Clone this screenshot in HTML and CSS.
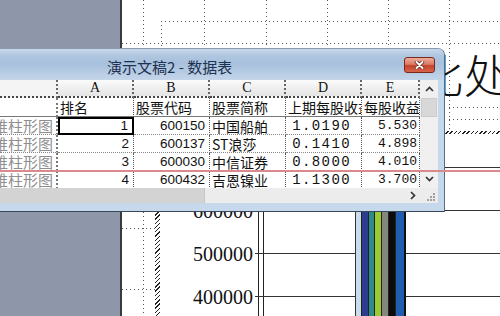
FILE: index.html
```html
<!DOCTYPE html>
<html lang="zh">
<head>
<meta charset="utf-8">
<title>演示文稿2 - 数据表</title>
<link rel="stylesheet" href="styles.css">
</head>
<body>
<div class="screen">
  <div class="sidebar"></div>
  <div class="slide">
    <div class="vdot v1"></div>
    <div class="vdot v2"></div>
    <div class="vdot v3"></div>
    <div class="vdot v4"></div>
    <div class="vdot v5"></div>
    <div class="vdot v6"></div>
    <div class="vdot v7"></div>
    <div class="hdot h1"></div>
    <div class="hdot h2"></div>
    <div class="hdot h3"></div>
    <div class="hdot h4"></div>
    <div class="hdot h5"></div>
    <div class="hdot h6"></div>
    <div class="slide-title">比处</div>
    <div class="chart">
      <div class="hatch-top"></div>
      <div class="chart-main">
        <div class="hatch-left"></div>
        <div class="plot">
          <div class="tick"><span class="lab">700000</span><div class="tick-line"><div class="axis"></div><div class="grid"></div></div></div>
          <div class="tick"><span class="lab">600000</span><div class="tick-line"><div class="axis"></div><div class="grid"></div></div></div>
          <div class="tick"><span class="lab">500000</span><div class="tick-line"><div class="axis"></div><div class="grid"></div></div></div>
          <div class="tick"><span class="lab">400000</span><div class="tick-line"><div class="axis"></div><div class="grid"></div></div></div>
          <div class="bars">
            <div class="bar b1"></div>
            <div class="bar b2"></div>
            <div class="bar b3"></div>
            <div class="bar b4"></div>
            <div class="bar b5"></div>
            <div class="bar b6"></div>
            <div class="bar b7"></div>
          </div>
        </div>
      </div>
    </div>
  </div>

  <div class="window">
    <div class="titlebar">
      <span class="title">演示文稿2 - 数据表</span>
      <div class="close"><svg width="11" height="8" viewBox="0 0 11 8"><path d="M2.5 1 L8.5 7 M8.5 1 L2.5 7" stroke="#5a1a10" stroke-width="3.4" stroke-linecap="round"/><path d="M2.5 1 L8.5 7 M8.5 1 L2.5 7" stroke="#fff" stroke-width="2" stroke-linecap="round"/></svg></div>
    </div>
    <div class="client">
      <div class="sheet">
        <div class="c hd corner"></div>
        <div class="c hd">A</div>
        <div class="c hd">B</div>
        <div class="c hd">C</div>
        <div class="c hd">D</div>
        <div class="c hd">E</div>

        <div class="c rh r0"></div>
        <div class="c r0">排名</div>
        <div class="c r0">股票代码</div>
        <div class="c r0">股票简称</div>
        <div class="c r0">上期每股收益</div>
        <div class="c r0">每股收益</div>

        <div class="c rh">三维柱形图</div>
        <div class="c num sel">1</div>
        <div class="c num">600150</div>
        <div class="c">中国船舶</div>
        <div class="c dec">1.0190</div>
        <div class="c dec2">5.530</div>

        <div class="c rh">三维柱形图</div>
        <div class="c num">2</div>
        <div class="c num">600137</div>
        <div class="c">ST浪莎</div>
        <div class="c dec">0.1410</div>
        <div class="c dec2">4.898</div>

        <div class="c rh">三维柱形图</div>
        <div class="c num">3</div>
        <div class="c num">600030</div>
        <div class="c">中信证券</div>
        <div class="c dec">0.8000</div>
        <div class="c dec2">4.010</div>

        <div class="c rh">三维柱形图</div>
        <div class="c num">4</div>
        <div class="c num">600432</div>
        <div class="c">吉恩镍业</div>
        <div class="c dec">1.1300</div>
        <div class="c dec2">3.700</div>
      </div>
      <div class="vscroll">
        <div class="sbtn"><svg width="9" height="6" viewBox="0 0 9 6"><path d="M1 5 L4.5 1.5 L8 5" fill="none" stroke="#333" stroke-width="1.7"/></svg></div>
        <div class="vthumb"></div>
        <div class="vspace"></div>
        <div class="sbtn"><svg width="9" height="6" viewBox="0 0 9 6"><path d="M1 1 L4.5 4.5 L8 1" fill="none" stroke="#333" stroke-width="1.7"/></svg></div>
      </div>
    </div>
    <div class="hbar">
      <div class="htrack">
        <div class="hthumb"></div>
        <div class="hright"><svg width="6" height="9" viewBox="0 0 6 9"><path d="M1 1 L4.5 4.5 L1 8" fill="none" stroke="#333" stroke-width="1.7"/></svg></div>
      </div>
      <div class="grip"><svg width="10" height="10" viewBox="0 0 10 10"><rect x="7" y="1" width="2" height="2" fill="#a0a0a0"/><rect x="4" y="4" width="2" height="2" fill="#a0a0a0"/><rect x="7" y="4" width="2" height="2" fill="#a0a0a0"/><rect x="1" y="7" width="2" height="2" fill="#a0a0a0"/><rect x="4" y="7" width="2" height="2" fill="#a0a0a0"/><rect x="7" y="7" width="2" height="2" fill="#a0a0a0"/></svg></div>
    </div>
  </div>

  <div class="redline"></div>
</div>
</body>
</html>
```
FILE: styles.css
```css
* { box-sizing: border-box; margin: 0; padding: 0; }
html, body { margin: 0; width: 500px; height: 316px; overflow: hidden; background: #fff; }
body { font-family: "Noto Sans CJK SC", sans-serif; }

.screen { position: relative; width: 500px; height: 316px; display: flex; overflow: hidden; background: #fff; }
.sidebar { flex: none; width: 122px; background: #8e97aa; border-right: 2px solid #3a3a3a; }
.slide { position: relative; flex: 1; background: #fff; }

.vdot { position: absolute; width: 1px; background: repeating-linear-gradient(to bottom, #555 0 1px, transparent 1px 4px); }
.hdot { position: absolute; height: 1px; background: repeating-linear-gradient(to right, #555 0 1px, transparent 1px 4px); }
.v1 { left: 21px; top: 0; height: 316px; }
.v2 { left: 39px; top: 21px; height: 28px; }
.v3 { left: 82px; top: 0; height: 48px; }
.v4 { left: 144px; top: 0; height: 48px; }
.v5 { left: 205px; top: 0; height: 48px; }
.v6 { left: 266px; top: 0; height: 48px; }
.v7 { left: 327px; top: 0; height: 131px; }
.h1 { left: 39px; right: 0; top: 21px; }
.h2 { left: 0; right: 0; top: 43px; }
.h3 { left: 327px; right: 0; top: 107px; }
.h4 { left: 327px; right: 0; top: 119px; }
.h5 { left: 0; width: 33px; top: 228px; }
.h6 { left: 0; width: 33px; top: 289px; }

.slide-title { position: absolute; left: 296px; top: 50px; font-size: 46px; line-height: 46px; font-weight: 300; color: #111; white-space: nowrap; }

.chart { position: absolute; left: 33px; top: 131px; right: -40px; bottom: -40px; display: flex; flex-direction: column; }
.hatch-top { flex: none; height: 3px; background: repeating-linear-gradient(135deg, #222 0 1px, #fff 1px 3px); }
.chart-main { flex: 1; display: flex; }
.hatch-left { flex: none; width: 5px; background: repeating-linear-gradient(135deg, #222 0 1px, #fff 1px 3px); }
.plot { flex: 1; position: relative; padding-top: 33px; }
.tick { height: 43px; display: flex; }
.lab { flex: none; width: 95px; padding-right: 2px; margin-top: -9px; height: 20px; text-align: right; font-family: "Liberation Serif", serif; font-size: 20px; line-height: 20px; color: #111; }
.tick-line { flex: 1; display: flex; border-top: 1.5px solid #333; }
.axis { flex: none; width: 6px; margin-left: 3px; border-left: 1.5px solid #222; border-right: 1.5px solid #222; }
.grid { flex: 1; }

.bars { position: absolute; left: 195px; top: 0; bottom: 0; display: flex; border-left: 1px solid #333; border-right: 2px solid #111; }
.bar { height: 100%; border-right: 1px solid #222; }
.b1 { width: 6px; background: #c9dceb; }
.b2 { width: 7px; background: #2d3c8e; }
.b3 { width: 6px; background: #2f8a8c; }
.b4 { width: 7px; background: #9acb35; }
.b5 { width: 7px; background: #85877c; }
.b6 { width: 7px; background: #0c0c0c; }
.b7 { width: 8px; background: #1f5db0; border-right: none; }

.window { position: absolute; left: 0; top: 48px; width: 445px; height: 164px; display: flex; flex-direction: column; background: #c6d8ec; border-top: 1px solid #8a9ab0; border-right: 1px solid #5b6a7f; border-bottom: 1px solid #3b475a; border-top-right-radius: 7px; }
.titlebar { flex: none; height: 31px; display: flex; align-items: center; padding-top: 5px; padding-left: 107px; border-top-right-radius: 6px; background: linear-gradient(#c9d8ea 0, #b0c7e0 20%, #a7c0dc 45%, #b6cbe3 75%, #c5d6ea 100%); }
.title { font-size: 15px; line-height: 20px; color: #1d3150; white-space: nowrap; }
.close { margin-left: auto; margin-right: 9px; margin-top: -4px; width: 31px; height: 16px; border-radius: 3px; border: 1px solid #7a2a1c; background: linear-gradient(#eeaa9c 0, #dc7a64 45%, #c4432c 55%, #d6654c 100%); display: flex; align-items: center; justify-content: center; }

.client { flex: none; height: 108px; margin-right: 6px; display: flex; background: #fff; }
.sheet { flex: none; width: 420px; display: grid; grid-template-columns: 58px 76px 76px 76px 76px 58px; grid-template-rows: 18px 19px 18px 18px 18px 18px; align-content: start; overflow: hidden; }
.c { display: flex; align-items: center; overflow: hidden; white-space: nowrap; padding: 0 2px; font-size: 14px; line-height: 16px; color: #111; border-right: 1px dotted #555; border-bottom: 1px dotted #888; }
.hd { justify-content: center; font-family: "Liberation Serif", serif; font-size: 14px; background: linear-gradient(#fbfbfb, #e4e4e4); border-right: 2px dotted #666; border-bottom: 2px dotted #444; }
.corner { background: #f4f4f4; }
.r0 { border-bottom: 1px solid #777; }
.rh { justify-content: flex-end; padding-right: 3px; color: #8f8f8f; font-size: 15px; border-right: 2px dotted #777; }
.num { justify-content: flex-end; font-family: "Liberation Sans", sans-serif; font-size: 13.5px; padding-right: 4px; }
.dec { justify-content: flex-end; font-family: "Liberation Mono", monospace; font-size: 14px; letter-spacing: 1.4px; padding-right: 10px; }
.dec2 { justify-content: flex-end; font-family: "Liberation Mono", monospace; font-size: 13px; padding-right: 2px; }
.sel { border: 2px solid #000; }

.vscroll { flex: none; width: 18px; display: flex; flex-direction: column; background: #f0f0f0; }
.sbtn { flex: none; height: 18px; display: flex; align-items: center; justify-content: center; }
.vthumb { flex: none; height: 19px; margin: 0 1px; background: #d8d8d8; border: 1px solid #cbcbcb; }
.vspace { flex: 1; }

.hbar { flex: none; height: 15px; margin-right: 6px; display: flex; }
.htrack { flex: none; width: 420px; display: flex; background: #ececec; }
.hthumb { flex: none; width: 205px; background: #d3d3d3; border-right: 1px solid #c4c4c4; }
.hright { margin-left: auto; width: 15px; display: flex; align-items: center; justify-content: center; }
.grip { flex: 1; display: flex; align-items: flex-end; justify-content: flex-end; padding: 0 2px 1px 0; background: #ececec; }

.redline { position: absolute; left: 0; right: 0; top: 170px; height: 2px; background: #d88a8c; }
```
